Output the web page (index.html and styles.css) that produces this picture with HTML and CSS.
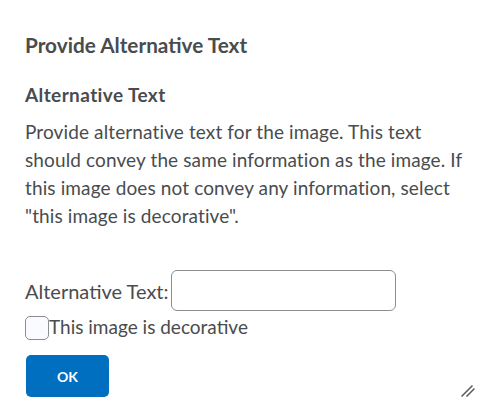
FILE: index.html
```html
<!DOCTYPE html>
<html lang="en">
<head>
<meta charset="utf-8">
<title>Provide Alternative Text</title>
<link rel="stylesheet" href="styles.css">
</head>
<body>
<div class="dialog">
  <h1 class="dialog-title">Provide Alternative Text</h1>
  <h2 class="section-title">Alternative Text</h2>
  <p class="description">Provide alternative text for the image. This text should convey the same information as the image. If this image does not convey any information, select "this image is decorative".</p>
  <div class="field-row">
    <label class="field-label" for="alt">Alternative Text:</label>
    <input class="text-input" id="alt" type="text">
  </div>
  <label class="check-row">
    <span class="checkbox"></span>
    <span class="check-label">This image is decorative</span>
  </label>
  <div class="footer">
    <button class="btn-primary" type="button">OK</button>
    <svg class="grip" width="14" height="13" viewBox="0 0 14 13" aria-hidden="true">
      <path d="M0.5 12.5 L11.5 1.5 M5.5 12.5 L13.5 4.5" stroke="#55595c" stroke-width="1.5" fill="none"/>
    </svg>
  </div>
</div>
</body>
</html>
```

FILE: styles.css
```css
html, body {
  margin: 0;
  padding: 0;
  background: #ffffff;
}

body {
  font-family: Lato, "Noto Sans", sans-serif;
  color: #494c4e;
}

.dialog {
  width: 499px;
  height: 419px;
  box-sizing: border-box;
  padding: 33px 25px 0 25px;
  display: flex;
  flex-direction: column;
}

.dialog-title {
  margin: 0;
  font-size: 20.75px;
  line-height: 24px;
  font-weight: 700;
}

.section-title {
  margin: 27px 0 0 0;
  font-size: 19px;
  line-height: 22px;
  font-weight: 700;
  letter-spacing: 0.4px;
}

.description {
  margin: 12px 0 0 0;
  font-size: 19px;
  line-height: 28px;
  letter-spacing: 0.12px;
  width: 445px;
}

.field-row {
  margin-top: 40px;
  display: flex;
  align-items: center;
  gap: 2px;
}

.field-label {
  font-size: 20px;
  line-height: 28px;
}

.text-input {
  width: 225px;
  height: 41px;
  box-sizing: border-box;
  border: 1px solid #8a8e91;
  border-radius: 6px;
  background: #ffffff;
  margin: 0;
  padding: 0 10px;
  font: inherit;
}

.check-row {
  margin-top: 5px;
  display: flex;
  align-items: flex-start;
}

.checkbox {
  width: 24px;
  height: 24px;
  box-sizing: border-box;
  border: 1px solid #8a8e91;
  border-radius: 5px;
  background: #f9fbff;
  flex: none;
}

.check-label {
  font-size: 19px;
  line-height: 28px;
  margin-top: -3px;
}

.footer {
  margin-top: 14px;
  display: flex;
  align-items: flex-end;
  justify-content: space-between;
}

.btn-primary {
  margin-left: 1px;
  width: 83px;
  height: 42px;
  border: none;
  border-radius: 5px;
  background: #006fbf;
  color: #ffffff;
  font-family: Lato, "Noto Sans", sans-serif;
  font-size: 14px;
  font-weight: 700;
  padding: 0;
}

.grip {
  margin-right: -1px;
  margin-bottom: 0;
}
```
